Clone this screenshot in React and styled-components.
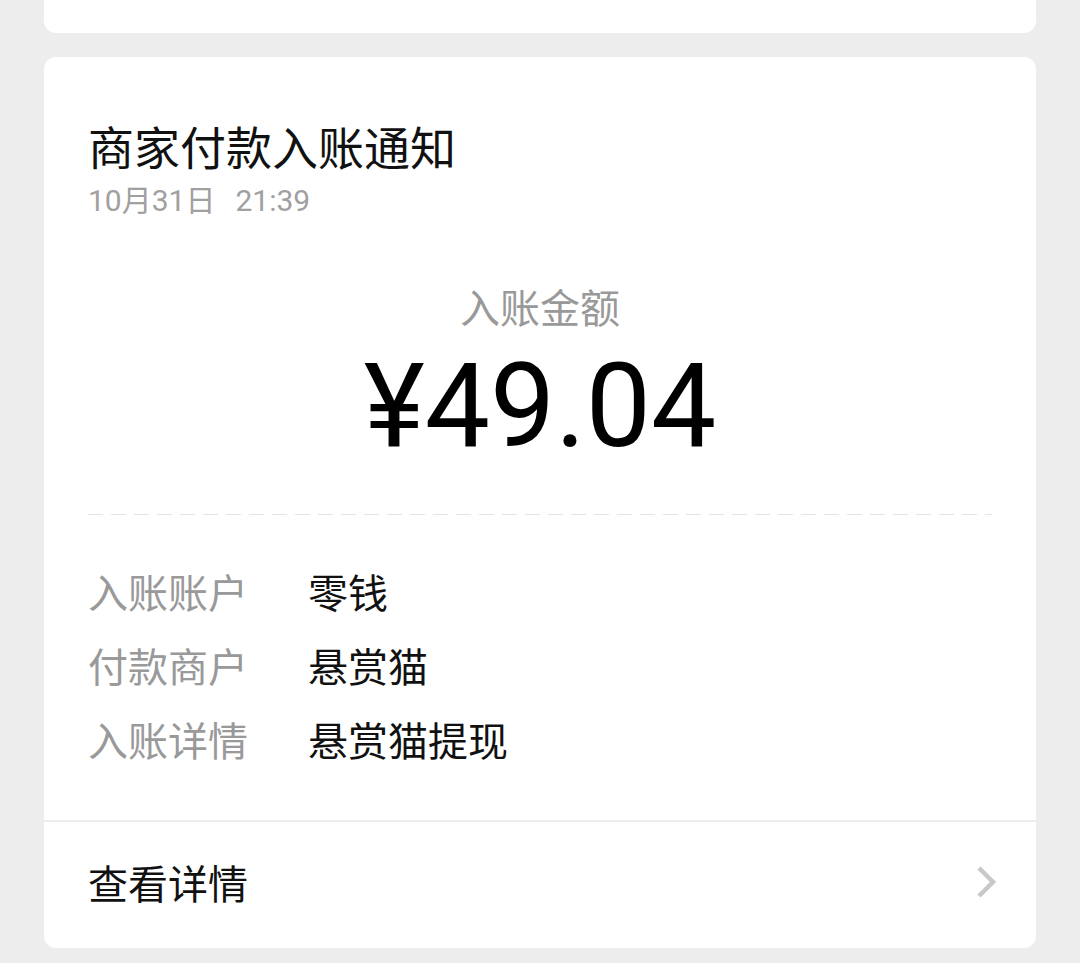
import React from 'react';
import styled, { createGlobalStyle } from 'styled-components';

const Global = createGlobalStyle`
  html, body {
    margin: 0;
    padding: 0;
    background: #ededed;
  }
  body {
    font-family: "Noto Sans CJK SC", "Noto Sans", sans-serif;
  }
`

const Page = styled.div`
  display: flex;
  flex-direction: column;
  gap: 24px;
  padding: 0 44px;
  height: 963px;
  overflow: hidden;
`

const TopCard = styled.div`
  height: 33px;
  background: #fff;
  border-radius: 0 0 12px 12px;
`

const Card = styled.div`
  background: #fff;
  border-radius: 12px;
  overflow: hidden;
`

const Head = styled.div`
  padding: 60px 44px 44px;
`

const Title = styled.div`
  font-size: 46px;
  line-height: 56px;
  color: #111;
`

const Time = styled.div`
  margin-top: 8px;
  font-family: Roboto, "Noto Sans CJK SC", sans-serif;
  font-size: 30px;
  line-height: 40px;
  color: #a0a0a0;
  span { margin-left: 20px; }
`

const AmountLabel = styled.div`
  margin-top: 60px;
  text-align: center;
  font-size: 40px;
  line-height: 50px;
  color: #999;
`

const Amount = styled.div`
  margin-top: 10px;
  text-align: center;
  font-family: Roboto, "Noto Sans", sans-serif;
  font-size: 116px;
  line-height: 130px;
  color: #000;
`

const Dashed = styled.div`
  margin-top: 43px;
  height: 1px;
  background-image: linear-gradient(to right, #e3e3e3 0 15px, transparent 15px 23px);
  background-size: 23px 1px;
  background-repeat: repeat-x;
`

const Rows = styled.div`
  margin-top: 39px;
`

const Row = styled.div`
  display: flex;
  height: 74px;
  align-items: center;
  font-size: 40px;
`

const Label = styled.div`
  width: 220px;
  color: #999;
`

const Value = styled.div`
  color: #111;
`

const Footer = styled.div`
  border-top: 2px solid #ececec;
  height: 128px;
  display: flex;
  align-items: center;
  justify-content: space-between;
  padding: 0 38px 6px 44px;
  box-sizing: border-box;
  font-size: 40px;
  color: #111;
`

const rows = [
  ['入账账户', '零钱'],
  ['付款商户', '悬赏猫'],
  ['入账详情', '悬赏猫提现'],
]

const App = () => {
  return (
    <Page>
      <Global />
      <TopCard />
      <Card>
        <Head>
          <Title>商家付款入账通知</Title>
          <Time>10月31日<span>21:39</span></Time>
          <AmountLabel>入账金额</AmountLabel>
          <Amount>¥49.04</Amount>
          <Dashed />
          <Rows>
            {rows.map(([k, v]) => (
              <Row key={k}>
                <Label>{k}</Label>
                <Value>{v}</Value>
              </Row>
            ))}
          </Rows>
        </Head>
        <Footer>
          <span>查看详情</span>
          <svg width="24" height="36" viewBox="0 0 24 36">
            <polyline points="5,4 19,18 5,32" fill="none" stroke="#c8c8c8" strokeWidth="4.5" />
          </svg>
        </Footer>
      </Card>
    </Page>
  )
}

export default App;
